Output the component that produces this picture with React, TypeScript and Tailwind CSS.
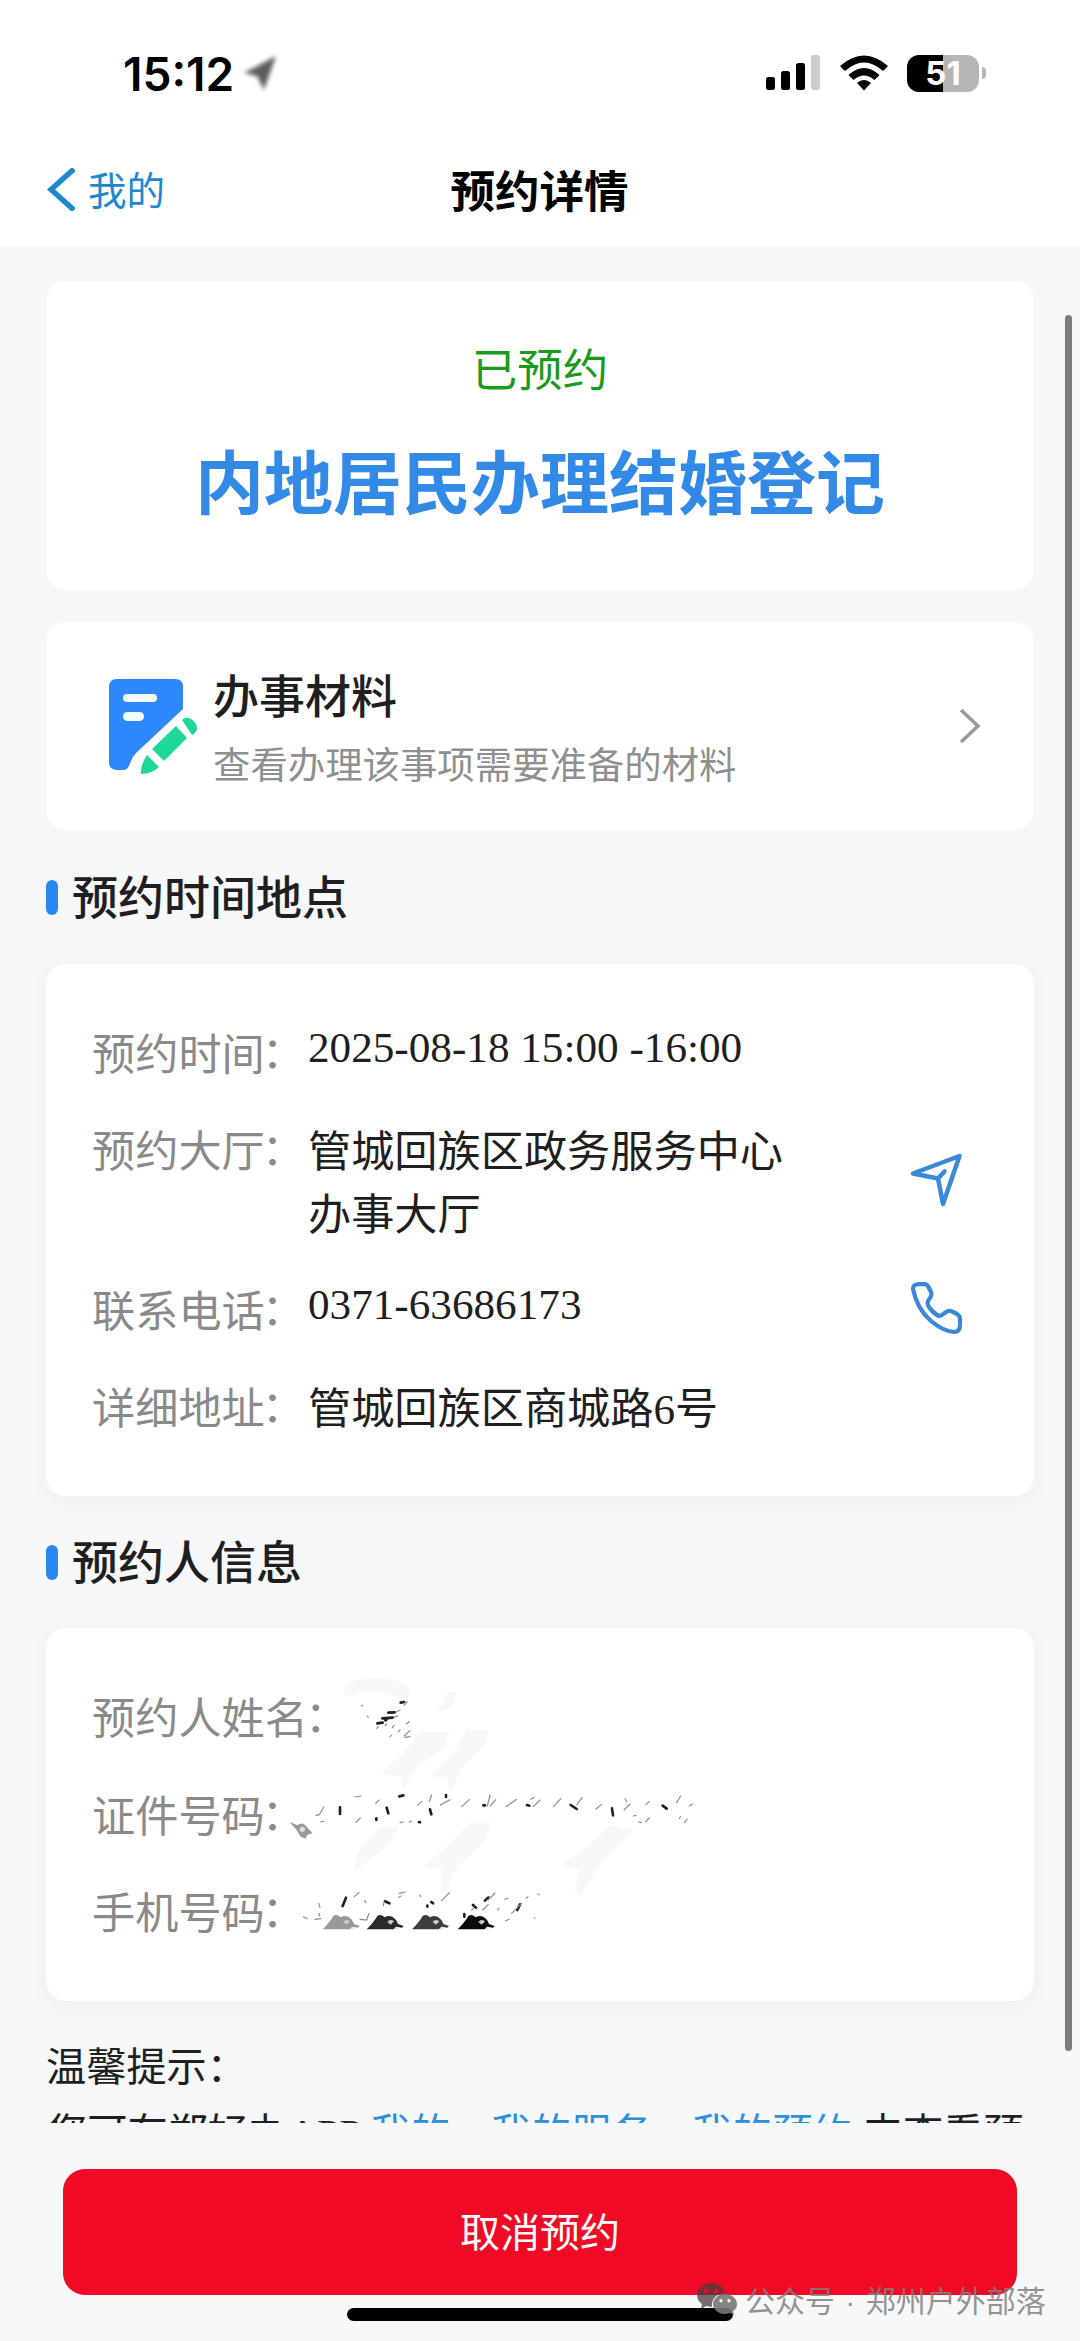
import type { ReactNode } from 'react'

interface DetailRow {
  label: string
  value?: string
  latin?: boolean
  action?: ReactNode
}

const cjk = "font-['Noto_Sans_CJK_SC',sans-serif]"
const serif = "font-['Liberation_Serif','Noto_Sans_CJK_SC',serif]"

function SendIcon() {
  return (
    <svg className="h-[54px] w-[54px]" viewBox="0 0 54 54" fill="none" stroke="#3b88d6" strokeWidth="4.500" strokeLinejoin="round" strokeLinecap="round">
      <path d="M50.500 3 4 20.500 29 25.500 34 51Z" />
      <path d="M29 25.500 35.500 18.500" />
    </svg>
  )
}

function PhoneIcon() {
  return (
    <svg className="h-[54px] w-[54px]" viewBox="0 0 54 54" fill="none" stroke="#3b88d6" strokeWidth="4.200" strokeLinejoin="round" strokeLinecap="round">
      <path d="M4 7C4 3.500 6 2.500 10 2.200L15 2Q18 2 19.500 5L22 10Q23 12 21.500 15L19 19Q18 22 20 25Q24 31 29 33.500Q31 34.500 33.500 32.500L38 29.500Q40.500 28 43 29.500L48 32Q51 34 51 37V43Q51 50 45 50Q34 49 22 39Q8 27 4 7Z" />
    </svg>
  )
}

const timeRows: DetailRow[] = [
  { label: '预约时间', value: '2025-08-18 15:00 -16:00', latin: true },
  { label: '预约大厅', value: '管城回族区政务服务中心办事大厅', action: <SendIcon /> },
  { label: '联系电话', value: '0371-63686173', latin: true, action: <PhoneIcon /> },
  { label: '详细地址', value: '管城回族区商城路6号' },
]

const personRows: DetailRow[] = [{ label: '预约人姓名' }, { label: '证件号码' }, { label: '手机号码' }]

function StatusBar() {
  return (
    <div className="flex h-[146px] items-center justify-between pr-[94px] pl-[123px]">
      <div className="flex items-center gap-1.5">
        <span className="pt-0.5 font-['Inter',sans-serif] text-[46px] leading-none font-semibold text-black">15:12</span>
        <svg className="h-10 w-10 blur-[2px]" viewBox="0 0 40 40" fill="#5c5c5c">
          <path d="M36 3 4 20 17 23 24 37Z" />
        </svg>
      </div>
      <div className="flex items-center">
        <svg className="h-9 w-[55px]" viewBox="0 0 55 36">
          <rect x="0" y="22" width="9" height="13" rx="2.500" />
          <rect x="15" y="16" width="9" height="19" rx="2.500" />
          <rect x="30" y="8" width="9" height="27" rx="2.500" />
          <rect x="45" y="0" width="9" height="35" rx="2.500" fill="#ccc" />
        </svg>
        <svg className="ml-[19px] h-9 w-12" viewBox="0 0 48 36">
          <path d="M0 11Q24-10 48 11L43 16Q24-1 5 16Z" />
          <path d="M8.500 20Q24 6 39.500 20L34.500 25Q24 16 13.500 25Z" />
          <path d="M17 28Q24 22 31 28L24 35.500Z" />
        </svg>
        <div className="ml-[19px] flex items-center">
          <div className="flex h-[37px] w-[72px] items-center justify-center rounded-[12px] bg-[linear-gradient(90deg,#000_50%,#b5b5b5_50%)]">
            <span className="font-['Inter',sans-serif] text-[33px] leading-none font-bold text-white">51</span>
          </div>
          <div className="ml-[3px] h-3 w-1 rounded-r-full bg-[#b5b5b5]" />
        </div>
      </div>
    </div>
  )
}

function NavBar() {
  return (
    <div className={`${cjk} relative flex h-[100px] items-start justify-center`}>
      <div className="absolute top-[22px] left-[47px] flex items-start text-[#1e88cf]">
        <svg className="h-[43px] w-[28px]" viewBox="0 0 28 43" fill="none" stroke="currentColor" strokeWidth="5.500">
          <path d="M27 1 4 21.500 27 42" />
        </svg>
        <span className="-mt-0.5 ml-[13px] text-[38.500px] leading-[44px]">我的</span>
      </div>
      <h1 className="mt-[15px] mr-px text-[44.500px] leading-[56px] font-bold text-black">预约详情</h1>
    </div>
  )
}

function SectionTitle({ children }: { children: string }) {
  return (
    <div className="flex items-center">
      <span className="h-[35px] w-3 rounded-full bg-[#2b87f0]" />
      <h2 className={`${cjk} -mt-1.5 ml-3.5 text-[46px] leading-[60px] font-medium text-[#1f1f1f]`}>{children}</h2>
    </div>
  )
}

function Row({ row }: { row: DetailRow }) {
  return (
    <div className="flex items-center justify-between">
      <div className="flex items-start text-[43.200px] leading-[63px]">
        <span className={`${cjk} shrink-0 text-[#8a8a8a]`}>
          {row.label}
          <span className="relative -top-0.5 -left-[3px]">：</span>
        </span>
        <span className={`${serif} w-[480px] text-[#1f1f1f] ${row.latin ? '-mt-1' : 'mt-1 -mb-1'}`}>{row.value}</span>
      </div>
      {row.action}
    </div>
  )
}

function MaterialIcon() {
  return (
    <svg className="mt-0.5 h-24 w-[90px] shrink-0" viewBox="0 0 90 96">
      <path fill="#2f88fb" d="M8 0H66Q74 0 74 8V30L27 74Q24 77 22 82L20 87Q18 91 14 91H8Q0 91 0 83V8Q0 0 8 0Z" />
      <rect x="14" y="15" width="34" height="8" rx="4" fill="#f4fbff" />
      <rect x="14" y="33" width="21" height="9" rx="4.500" fill="#f4fbff" />
      <g fill="#20d79b">
        <path d="M73 41Q77 37 82 40Q88 44 88 50Q87 54 83 56Z" />
        <path d="M67 47 78 59 55 82 43 70Z" />
        <path d="M38 76 50 88Q43 95 32 95Q31 87 38 76Z" />
      </g>
    </svg>
  )
}

// hand-scrubbed personal data
function Scrubbed() {
  return (
    <svg className="absolute top-8 left-[224px] h-[300px] w-[450px]" viewBox="0 0 1350 900">
      <g fill="#f8f8f8">
        <path d="M220 100Q230 55 300 55Q400 50 425 95L400 125Q330 70 240 110Z" />
        <path d="M450 215H540L520 265 440 320 400 390 390 350 335 340 400 280Z" />
        <path d="M590 210H655L650 250 570 330 540 400 530 355 480 350 550 280Z" />
        <path d="M500 160 535 95H560L545 140Z" />
        <path d="M330 500H385L340 570 250 635 260 580Z" />
        <path d="M600 488H665L640 550 560 620 530 690 510 705 520 630 460 620 530 560Z" />
        <path d="M1020 495 1090 510 990 610 930 710 915 690 930 630 870 615 940 570Z" />
      </g>
      <g stroke="#222" strokeLinecap="round" strokeWidth="8" fill="none">
        <path d="M392 128 402 126M355 158 374 157M337 175 368 173M322 190 338 188M346 181 356 174" />
        <path d="M210 442V462M350 443 355 460M319 475V480M388 409 400 406M480 448 484 463M447 486 450 487M528 405V411M640 436H645M771 435 778 437M902 435 920 447M1026 445 1029 466M1178 437 1190 446" />
        <path d="M228 713 218 738M345 724 358 730M472 737V740M484 726 489 730M609 735 618 743M655 712 645 722M750 733 742 750M583 762V770" />
      </g>
      <g stroke="#8b8b8b" strokeLinecap="round" strokeWidth="3.500" fill="none">
        <path d="M378 157 390 150M402 136 412 125M372 172 384 168M345 197 350 192M367 203 372 196M385 215 390 210M360 230 365 226M402 228 420 212M405 232 420 230M409 192 418 185M320 205 325 200M292 168 295 172M275 138 278 136" />
        <path d="M138 466 148 464 161 441M152 486 160 484M255 411 273 408M257 487 271 474M317 430 327 420M390 488 400 486M418 487 425 483M443 436 455 424M478 425 485 405M511 436 520 430 540 419M575 440 598 419M652 438 660 405M660 438 677 419M708 440 740 418M790 440 810 420M783 418 792 412M850 440 873 415M920 435 936 413M978 447 995 433M1062 450 1080 432M1065 416 1070 425M1090 468 1098 466M1105 486 1115 488M1127 485 1138 474M1128 434 1138 424M1220 428 1232 408M1228 475 1232 470M1243 488 1252 477M1258 438 1268 432" />
        <path d="M100 770 112 776M146 730 150 742M135 778 152 776M147 760 149 768M253 710 267 697M283 722 288 728M270 778 290 780 297 760M340 738 342 726M386 713 392 708M388 700 405 696M449 705 452 710M515 722 538 698M654 720 675 699M638 750 655 733M605 750 610 745M683 750 686 745M705 718 714 714M706 783 718 778M725 760 755 730M768 715 774 710M803 702 808 704M793 773 795 775" />
      </g>
      <path d="M58 485 82 496Q98 482 114 505L128 520 112 524 107 536 92 530 80 510Z" fill="#999" />
      <circle cx="97" cy="508" r="8" fill="#ddd" />
      {[
        { x: 158, color: '#999' },
        { x: 290, color: '#2a2a2a' },
        { x: 426, color: '#3c3c3c' },
        { x: 563, color: '#0c0c0c' },
      ].map((m) => (
        <g key={m.x} transform={`translate(${m.x} 764)`}>
          <path d="M0 44Q22 22 32 4Q42-4 54 8Q72-2 86 14Q92 20 94 28L111 34 106 39 88 36 82 44Z" fill={m.color} />
          <path d="M62 22Q70 11 82 20L72 30Z" fill="#ccc" />
          <path d="M82 42 88 37 98 41 80 45Z" fill="#ddd" />
        </g>
      ))}
    </svg>
  )
}

function Watermark() {
  return (
    <div className="absolute top-[2276px] left-[697px] flex items-center font-['Liberation_Sans','Noto_Sans_CJK_SC',sans-serif] text-[#808080]/85">
      <svg className="h-[34px] w-10" viewBox="0 0 40 34">
        <path fill="#4b3b3e" fillOpacity=".75" fillRule="evenodd" d="M14 1C6 1 0 6 0 13c0 4 2 7 5 9l-1 5 5-3 6 1C14 17 20 11 28 11 27 5 21 1 14 1ZM9 7a2 2 0 1 1 0 4 2 2 0 0 1 0-4Zm10 0a2 2 0 1 1 0 4 2 2 0 0 1 0-4Z" />
        <path fill="#777" fillOpacity=".9" fillRule="evenodd" d="M28 12c-7 0-12 5-12 10s5 10 12 10l5-1 4 2-1-4c3-2 4-4 4-7 0-5-5-10-12-10Zm-4 5a1.700 1.700 0 1 1 0 3.400 1.700 1.700 0 0 1 0-3.400Zm8 0a1.700 1.700 0 1 1 0 3.400 1.700 1.700 0 0 1 0-3.400Z" />
      </svg>
      <span className="mt-1.5 ml-2 text-[30px] leading-[40px] whitespace-nowrap">
        公众号<span className="mx-0.5 whitespace-pre"> · </span>郑州户外部落
      </span>
    </div>
  )
}

export default function App() {
  return (
    <div className="relative flex h-[2341px] w-[1080px] flex-col overflow-hidden bg-[#f5f7f9]">
      <header className="h-[246px] shrink-0 bg-white">
        <StatusBar />
        <NavBar />
      </header>

      <main className="h-[1877px] shrink-0 overflow-hidden px-[46px] pt-[35px]">
        <section className={`${cjk} flex h-[309px] flex-col items-center rounded-[20px] bg-white pt-14`}>
          <p className="text-[45.500px] leading-[60px] text-[#1c9a1c]">已预约</p>
          <p className="mt-[37px] text-[69px] leading-[90px] font-bold text-[#338ae6]">内地居民办理结婚登记</p>
        </section>

        <section className={`${cjk} mt-8 flex h-[208px] items-center rounded-[20px] bg-white pr-[53px] pl-[63px]`}>
          <MaterialIcon />
          <div className="mt-1 ml-[14px] flex-1">
            <p className="text-[46px] leading-[64px] font-medium text-[#1f1f1f]">办事材料</p>
            <p className="mt-1.5 text-[37.400px] leading-[64px] text-[#8f8f8f]">查看办理该事项需要准备的材料</p>
          </div>
          <svg className="h-9 w-[22px]" viewBox="0 0 22 36" fill="none" stroke="#999" strokeWidth="3.500">
            <path d="M2 2 19 18 2 34" />
          </svg>
        </section>

        <div className="mt-10">
          <SectionTitle>预约时间地点</SectionTitle>
        </div>
        <section className="mt-10 flex h-[532px] flex-col gap-[34px] rounded-[20px] bg-white pt-14 pr-[71px] pl-[46px] shadow-[0_4px_24px_rgba(0,0,0,0.04)]">
          {timeRows.map((row) => (
            <Row key={row.label} row={row} />
          ))}
        </section>

        <div className="mt-[39px]">
          <SectionTitle>预约人信息</SectionTitle>
        </div>
        <section className="relative mt-[39px] flex h-[373px] flex-col gap-[34.500px] rounded-[20px] bg-white pt-14 pl-[46px] shadow-[0_4px_24px_rgba(0,0,0,0.04)]">
          {personRows.map((row) => (
            <Row key={row.label} row={row} />
          ))}
          <Scrubbed />
        </section>

        <div className={`${serif} mt-9 text-[40.200px] leading-[62px] text-[#1f1f1f]`}>
          <p>温馨提示：</p>
          <p className="mt-1 ml-px whitespace-nowrap">
            您可在郑好办APP <span className="text-[#2f8fdc]">我的—我的服务—我的预约</span> 中查看预
          </p>
        </div>
      </main>

      <footer className="flex flex-col items-center pt-[46px]">
        <button className={`${cjk} h-[126px] w-[954px] rounded-[22px] bg-[#f00a25] pb-1 text-[40px] text-white`}>取消预约</button>
        <div className="mt-[13px] h-[13px] w-[386px] rounded-full bg-black" />
      </footer>

      <div className="absolute top-[315px] left-[1065px] h-[1736px] w-[7px] rounded-full bg-[#7c7d7f]" />
      <Watermark />
    </div>
  )
}
